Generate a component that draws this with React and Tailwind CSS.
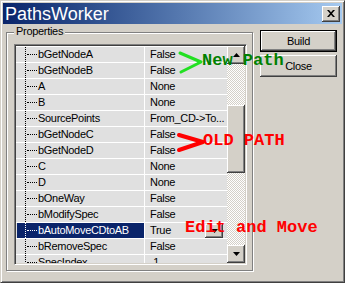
import React from "react";

const rows = [
  ["bGetNodeA", "False"],
  ["bGetNodeB", "False"],
  ["A", "None"],
  ["B", "None"],
  ["SourcePoints", "From_CD->To..."],
  ["bGetNodeC", "False"],
  ["bGetNodeD", "False"],
  ["C", "None"],
  ["D", "None"],
  ["bOneWay", "False"],
  ["bModifySpec", "False"],
  ["bAutoMoveCDtoAB", "True", true],
  ["bRemoveSpec", "False"],
  ["SpecIndex", "-1"],
];

const raised =
  "bg-[#d4d0c8] shadow-[inset_-1px_-1px_#404040,inset_1px_1px_#fff,inset_-2px_-2px_#808080,inset_2px_2px_#d4d0c8]";

function Tri({ down }) {
  return (
    <svg width="7" height="4" viewBox="0 0 7 4">
      {down ? <polygon points="0,0 7,0 3.5,4" fill="#000" /> : <polygon points="3.5,0 7,4 0,4" fill="#000" />}
    </svg>
  );
}

function Row({ name, value, sel }) {
  const dot = sel ? "border-white" : "border-black";
  return (
    <div className="h-[16px] shrink-0 border-t border-white flex">
      <div className="w-[128px] h-full pl-[1px] flex">
        <div className={"flex-1 h-full flex items-center " + (sel ? "bg-[#0a246a] text-white" : "")}>
          <div className={"ml-[8px] h-full border-l border-dotted flex items-center " + dot}>
            <div className={"ml-[1px] w-[10px] border-t border-dotted " + dot} />
          </div>
          <span className="ml-[1px] whitespace-nowrap leading-[15px]">{name}</span>
        </div>
      </div>
      <div className="w-[83px] h-full border-l border-white pl-[5px] flex items-center">
        <span className="whitespace-nowrap leading-[15px]">{value}</span>
        {sel && (
          <div className={"ml-auto mr-[4px] w-[18px] h-[14px] flex items-center justify-center " + raised}>
            <Tri down />
          </div>
        )}
      </div>
    </div>
  );
}

export default function App() {
  return (
    <div className="relative w-[345px] h-[283px] bg-[#d4d0c8] border border-t-[#d4d0c8] border-l-[#d4d0c8] border-r-[#404040] border-b-[#404040] shadow-[inset_1px_1px_#fff,inset_-1px_-1px_#808080] p-[2px] flex flex-col overflow-hidden font-['Liberation_Sans',Arial,sans-serif] text-[11px] tracking-[-0.3px] text-black">
      {/* Title bar */}
      <div className="h-[21px] shrink-0 flex items-center bg-linear-to-r from-[#0a246a] to-[#a6caf0] pl-[2px] pr-[2px]">
        <span className="flex-1 text-white text-[18px] leading-[18px] tracking-normal">PathsWorker</span>
        <div className={"w-[18px] h-[16px] flex items-center justify-center " + raised}>
          <svg width="8" height="7" viewBox="0 0 8 7">
            <path d="M0 0h2l2 2.3 2-2.3h2l-3 3.5 3 3.5h-2l-2-2.3-2 2.3h-2l3-3.5z" fill="#000" />
          </svg>
        </div>
      </div>

      {/* Body */}
      <div className="flex flex-1">
        {/* Group box */}
        <div className="relative ml-[3px] mt-[8px] w-[247px] h-[239px] border border-[#808080] shadow-[1px_1px_0_#fff,inset_1px_1px_0_#fff] pt-[11px] pl-[7px]">
          <div className="absolute left-[7px] top-[-8px] px-[2px] bg-[#d4d0c8] leading-[13px]">Properties</div>

          {/* Property list */}
          <div className="w-[233px] h-[221px] border border-t-[#808080] border-l-[#808080] border-r-white border-b-white shadow-[inset_1px_1px_#404040,inset_-1px_-1px_#d4d0c8] p-[1px] flex">
            <div className="w-[211px] h-full flex flex-col overflow-hidden bg-[#e0e0e0]">
              {rows.map(([n, v, s]) => (
                <Row key={n} name={n} value={v} sel={s} />
              ))}
            </div>
            <div className="w-[18px] h-full flex flex-col bg-[repeating-conic-gradient(#d4d0c8_0_25%,#fff_0_50%)] bg-[length:2px_2px]">
              <div className={"h-[18px] shrink-0 flex items-center justify-center " + raised}>
                <Tri />
              </div>
              <div className="flex-1 pt-[41px]">
                <div className={"h-[68px] " + raised} />
              </div>
              <div className={"h-[18px] shrink-0 flex items-center justify-center " + raised}>
                <Tri down />
              </div>
            </div>
          </div>
        </div>

        {/* Buttons */}
        <div className="ml-[7px] mt-[6px] flex flex-col gap-[3px]">
          <div className="w-[77px] h-[22px] border border-black">
            <div className={"w-full h-full flex items-center justify-center " + raised}>Build</div>
          </div>
          <div className={"w-[77px] h-[22px] flex items-center justify-center " + raised}>Close</div>
        </div>
      </div>

      {/* Annotations */}
      <div className="absolute -inset-px pointer-events-none font-['Liberation_Mono','Courier_New',monospace] font-bold text-[17px] leading-[17px] tracking-normal">
        <svg className="absolute left-0 top-0" width="345" height="283" viewBox="0 0 345 283">
          <polyline points="180,53 201,62 181,72" fill="none" stroke="#22e022" strokeWidth="3" strokeLinecap="round" strokeLinejoin="round" />
          <polyline points="179,135 203,142 179,150" fill="none" stroke="#ff0000" strokeWidth="4" strokeLinecap="round" strokeLinejoin="round" />
        </svg>
        <div className="absolute left-[202px] top-[52px] text-[#008000] whitespace-nowrap">New Path</div>
        <div className="absolute left-[203px] top-[132px] text-[#ff0000] whitespace-nowrap">OLD PATH</div>
        <div className="absolute left-[185px] top-[219px] text-[#ff0000] whitespace-pre">Edit and Move</div>
      </div>
    </div>
  );
}
